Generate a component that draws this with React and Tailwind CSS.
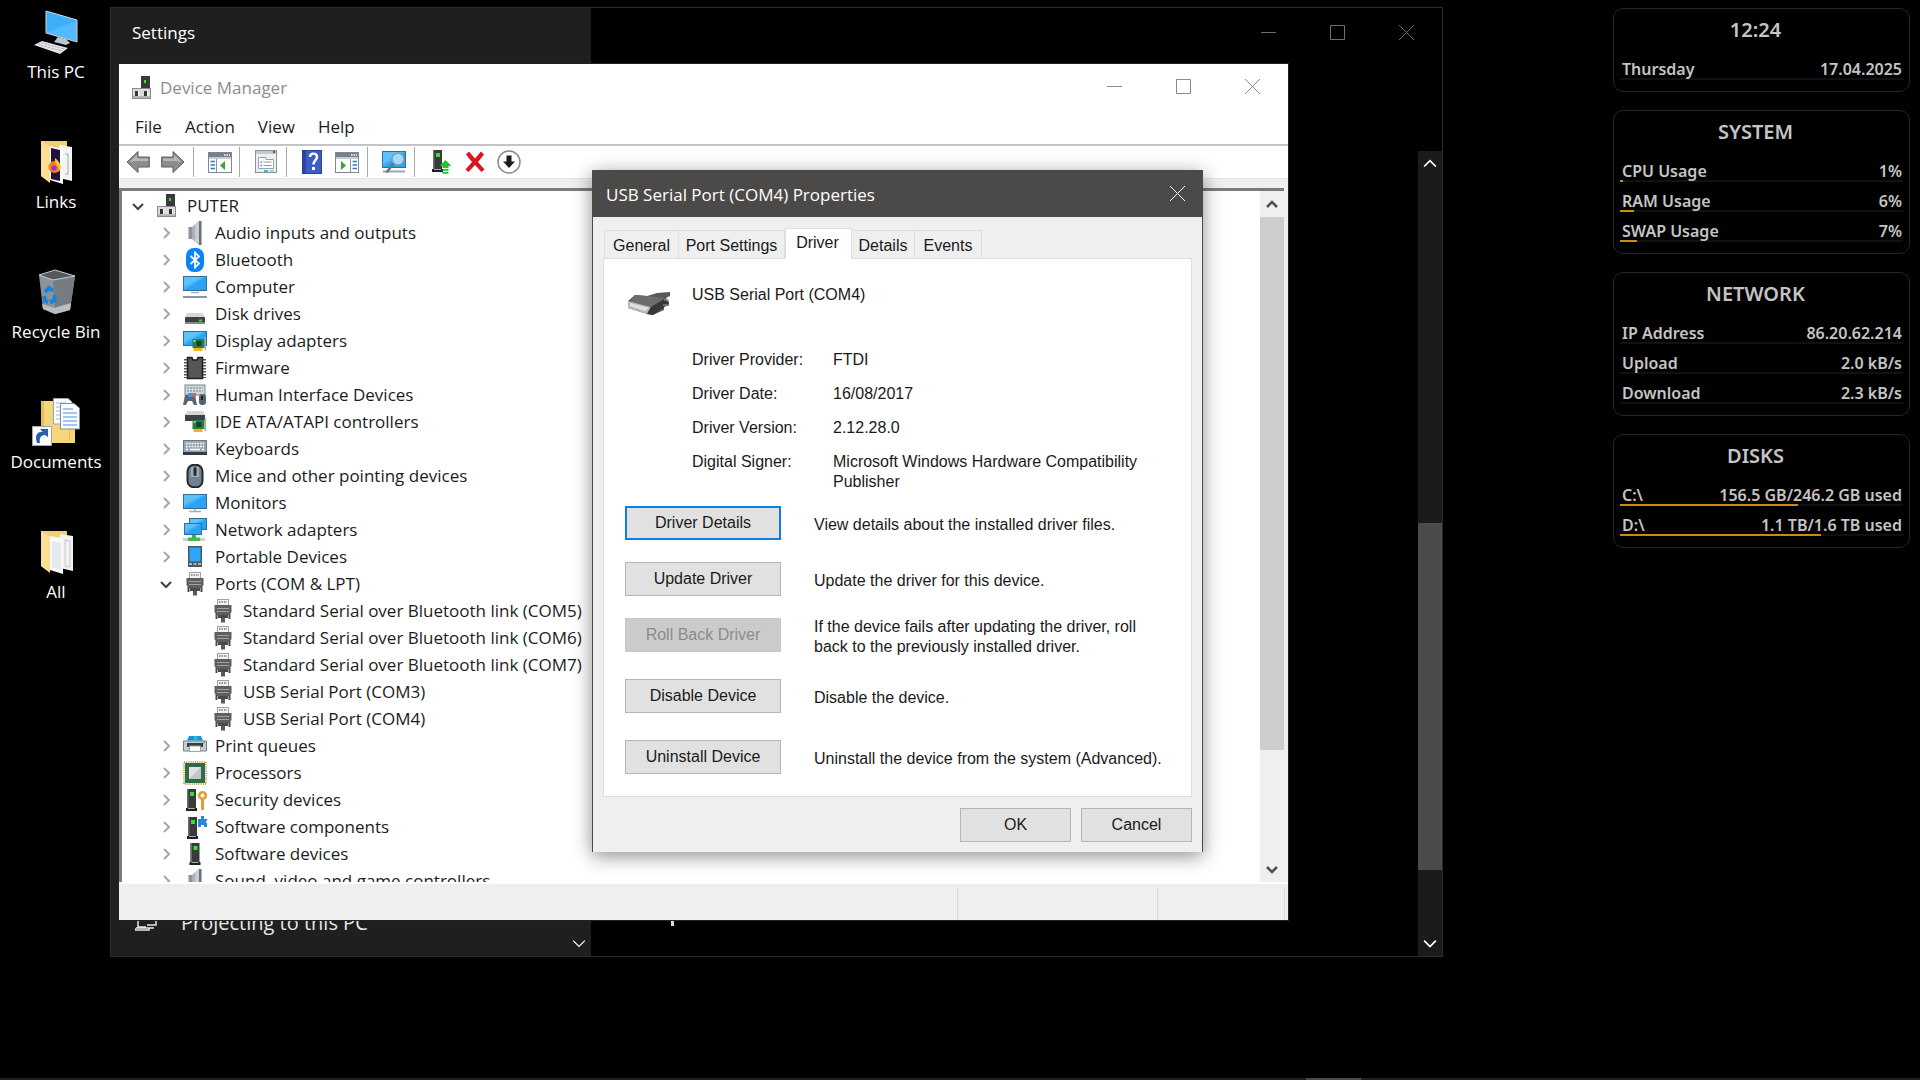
import React from "react";

const ui = "font-['Open_Sans','Noto_Sans',sans-serif]";
const shell = "font-['Liberation_Sans',Arial,sans-serif]";
const gadget = "font-['Trebuchet_MS','Noto_Sans','Open_Sans',sans-serif]";

function Svg({ size = "h-6 w-6", box = "0 0 24 24", children }) {
  return (
    <svg viewBox={box} className={`${size} block shrink-0`} aria-hidden="true">
      {children}
    </svg>
  );
}

/* ---------- shared drawing parts ---------- */

function Screen({ x = 0, y = 0, w = 24, h = 15 }) {
  return (
    <g>
      <rect x={x + 0.5} y={y + 0.5} width={w - 1} height={h - 1} fill="#3fb3f7" stroke="#2f6f98" />
      <path d={`M${x + 1} ${y + h - 1} L${x + w - 1} ${y + 1} V${y + h - 1} Z`} fill="#2aa3f2" />
      <path d={`M${x + 1} ${y + 1} H${x + w - 4} L${x + 1} ${y + h - 4} Z`} fill="#6cc9fb" opacity="0.7" />
    </g>
  );
}

function Tower({ x = 8, y = 1 }) {
  return (
    <g>
      <rect x={x + 1} y={y} width="9" height="19" fill="#3a3a3c" />
      <rect x={x + 1} y={y} width="1.5" height="19" fill="#6d6d70" />
      <rect x={x + 4} y={y + 3} width="4" height="4" fill="#2ee62e" />
      <rect x={x} y={y + 19} width="11" height="3" fill="#1f1f21" />
      <rect x={x + 2} y={y + 19} width="7" height="1" fill="#a9a9ab" />
    </g>
  );
}

function Card({ x = 10, y = 8 }) {
  return (
    <g>
      <rect x={x} y={y} width="12" height="9" fill="#2b7f45" />
      <rect x={x + 4} y={y + 2} width="5" height="5" fill="#173f2a" />
      <rect x={x + 1} y={y + 1} width="2" height="2" fill="#8fcf9f" />
      <rect x={x + 1} y={y + 9} width="9" height="3" fill="#f3b31b" />
      <rect x={x + 12} y={y - 2} width="1.5" height="13" fill="#a6acb0" />
    </g>
  );
}

/* ---------- tree icons ---------- */

const Manager = (
  <Svg>
    <rect x="11" y="0" width="9" height="13" fill="#39393b" />
    <rect x="14" y="4" width="2" height="3" fill="#2ee62e" />
    <rect x="2.500" y="12.500" width="18" height="10" fill="#dcdce0" stroke="#8b8b92" />
    <rect x="5" y="15" width="3" height="5" fill="#333" />
    <rect x="14" y="15" width="3" height="5" fill="#333" />
    <rect x="8" y="15" width="1" height="5" fill="#fff" />
    <rect x="17" y="15" width="1" height="5" fill="#fff" />
    <rect x="3" y="20" width="17" height="2" fill="#b5b5bb" />
  </Svg>
);
const Speaker = (
  <Svg>
    <path d="M5 6 H9 V18 H5 Z" fill="#8b949c" />
    <path d="M9 6 L16 0 V24 L9 18 Z" fill="#a9b0b6" />
    <path d="M12 3 L16 0 V24 L12 21 Z" fill="#c9ced2" />
    <rect x="16" y="0" width="2.500" height="24" fill="#68717a" />
    <rect x="5" y="6" width="1" height="12" fill="#c3c9ce" />
  </Svg>
);
const Bluetooth = (
  <Svg>
    <rect x="3" y="0" width="18" height="24" rx="8" fill="#0a84f5" />
    <path d="M7.500 8 L16 15.500 L12 19.500 V4.500 L16 8.500 L7.500 16" fill="none" stroke="#fff" strokeWidth="1.700" />
  </Svg>
);
const Computer = (
  <Svg>
    <Screen y={1} />
    <path d="M8 17.500 H16" stroke="#9fb0bd" strokeWidth="1.500" />
    <path d="M0 22 H24" stroke="#8798ab" strokeWidth="2" />
  </Svg>
);
const Disk = (
  <Svg>
    <path d="M4 11 H20 L22 15 H2 Z" fill="#d7d7da" />
    <rect x="2" y="15" width="20" height="7" rx="1" fill="#3e4043" />
    <rect x="2" y="20" width="20" height="2" fill="#88898c" />
    <rect x="16" y="17.500" width="3" height="2" fill="#2ee62e" />
  </Svg>
);
const Display = (
  <Svg>
    <Screen y={2} />
    <Card x={9.5} y={10} />
  </Svg>
);
const Firmware = (
  <Svg>
    <path d="M2.500 3 V22 M21.500 3 V22" stroke="#55585c" strokeWidth="3" strokeDasharray="1.500 1.500" />
    <path d="M4.500 1.500 H9 L10 4 H14 L15 1.500 H19.500 V22.500 H4.500 Z" fill="#55565a" stroke="#1e1f21" strokeWidth="1.500" />
  </Svg>
);
const Hid = (
  <Svg>
    <rect x="2" y="2" width="20" height="10" fill="#cfd6dc" stroke="#7a858f" />
    <path d="M4 5 H20 M4 8 H20" stroke="#7a858f" strokeDasharray="2 1" />
    <path d="M2 12 H12 L14 22 H11 L9 18 H5 L3 22 H0 Z" fill="#5a6672" />
    <rect x="5" y="10" width="5" height="4" fill="#2b9df0" />
    <rect x="10" y="10" width="3" height="4" fill="#e2642b" />
    <rect x="16" y="11" width="7" height="11" rx="3" fill="#56626e" />
    <rect x="18" y="13" width="2" height="4" fill="#222" />
  </Svg>
);
const Ide = (
  <Svg>
    <path d="M4 1 H20 L22 5 H2 Z" fill="#d7d7da" />
    <rect x="2" y="5" width="20" height="6" fill="#3e4043" />
    <Card x={9.5} y={10} />
  </Svg>
);
const Keyboard = (
  <Svg>
    <rect x="0.500" y="3.500" width="23" height="13" fill="#9aa7b2" stroke="#6b7783" />
    <path d="M3 6.500 H21 M3 9.500 H21" stroke="#fff" strokeWidth="1.500" strokeDasharray="1.700 1.100" />
    <path d="M3 12.500 H5 M7 12.500 H17 M19 12.500 H21" stroke="#fff" strokeWidth="1.500" />
    <rect x="0" y="15" width="24" height="3" fill="#333c45" />
  </Svg>
);
const Mouse = (
  <Svg>
    <rect x="4.500" y="0.800" width="15" height="22.500" rx="6.500" fill="#72828f" stroke="#24282c" strokeWidth="2" />
    <path d="M8 3 H16 V13 H8 Z" fill="#9badbc" />
    <rect x="10.500" y="3" width="3" height="9" rx="1.500" fill="#26292d" />
  </Svg>
);
const Monitor = (
  <Svg>
    <Screen y={3} />
    <path d="M12 18 V20 M6 20.500 H18" stroke="#9fb0bd" strokeWidth="1.500" />
  </Svg>
);
const Network = (
  <Svg>
    <Screen x={6} y={0} w={18} h={12} />
    <Screen x={1} y={5} w={18} h={12} />
    <rect x="9" y="17" width="4" height="3" fill="#3fae49" />
    <rect x="0" y="20" width="22" height="3" fill="#c9d2c9" />
    <rect x="5" y="19.500" width="12" height="3.500" fill="#46b84f" />
  </Svg>
);
const Portable = (
  <Svg>
    <rect x="5" y="1" width="14" height="21" fill="#4a5765" />
    <rect x="6.500" y="2.500" width="11" height="14" fill="#2ea5f8" />
    <path d="M6 19 H18" stroke="#aab6c1" strokeWidth="2" strokeDasharray="3 1.500" />
  </Svg>
);
const Port = (
  <Svg>
    <rect x="6.500" y="0.500" width="11" height="6" fill="#f2f2f2" stroke="#a2a2a4" />
    <path d="M8 3 H16" stroke="#77777a" strokeWidth="1.500" strokeDasharray="1.500 1" />
    <path d="M3.500 6 H20.500 V13 L18.500 16 H5.500 L3.500 13 Z" fill="#5f5f62" />
    <path d="M6 9.500 H18 M6 12.500 H18" stroke="#a2a2a5" />
    <path d="M7 16 H17 V19 H7 Z" fill="#4b4b4e" />
    <rect x="10" y="19" width="4" height="4.500" fill="#5a5a5d" />
    <path d="M5.500 15 V20 M18.500 15 V20" stroke="#4b4b4e" strokeWidth="2" />
  </Svg>
);
const Printer = (
  <Svg>
    <path d="M0.500 7 H23.500 V17 H0.500 Z" fill="#c7ccd0" stroke="#767e85" />
    <path d="M6 2 H18 L20 6.500 H4 Z" fill="#1d8fe8" />
    <path d="M11 2 H14 L15 6.500 H11 Z" fill="#1fc3a3" />
    <path d="M4 9 H20 V13 H4 Z" fill="#3a3d41" />
    <path d="M6.500 12 H17.500 V17.500 H6.500 Z" fill="#fff" stroke="#9da3a8" />
    <rect x="20" y="8" width="2" height="1.500" fill="#2ee62e" />
  </Svg>
);
const Cpu = (
  <Svg>
    <rect x="1" y="1" width="22" height="22" fill="none" stroke="#c3a04e" strokeWidth="2" strokeDasharray="1 1.200" />
    <rect x="2" y="2" width="20" height="20" fill="#2f6b49" />
    <rect x="6" y="6" width="12" height="12" fill="#dfe2e2" />
    <path d="M6 18 L18 6 V18 Z" fill="#c3c7c7" />
  </Svg>
);
const Security = (
  <Svg>
    <Tower x={3} y={1} />
    <circle cx="19.500" cy="7.500" r="3.300" fill="none" stroke="#dfa033" strokeWidth="2.600" />
    <path d="M19.500 11 V22" stroke="#dfa033" strokeWidth="3" />
  </Svg>
);
const SoftComp = (
  <Svg>
    <Tower x={4} y={2} />
    <path d="M15 4 H18 V1 H21 V4 H24 V6 H23 V8 H24 V12 H21 V10 H18 V12 H15 Z" fill="#2b87d8" />
  </Svg>
);
const SoftDev = (
  <Svg>
    <Tower x={6.5} y={1} />
  </Svg>
);

/* ---------- toolbar icons ---------- */

function ArrowIcon({ flip }) {
  return (
    <Svg>
      <g transform={flip ? "translate(24 0) scale(-1 1)" : undefined}>
        <path d="M1 12 L12 1.500 V7 H23.300 V17 H12 V22.500 Z" fill="#8d8d8d" stroke="#5c5c5c" strokeLinejoin="round" />
        <path d="M3.500 12 L11 5 V8.500 H22 V11 H8 Z" fill="#b9b9b9" />
      </g>
    </Svg>
  );
}
function PaneIcon({ right }) {
  return (
    <Svg>
      <rect x="0.500" y="2.500" width="23" height="20" fill="#fff" stroke="#7d8794" />
      <rect x="1" y="3" width="22" height="4" fill="#76808e" />
      <path d="M16 5 H22" stroke="#fff" strokeWidth="1.500" strokeDasharray="1.500 1" />
      <rect x="1" y="7" width="22" height="2" fill="#c5ccd4" />
      {right ? (
        <g>
          <path d="M15.500 9 V22" stroke="#8a94a1" />
          <path d="M17.500 11.500 H22 M17.500 15 H22 M17.500 18.500 H22" stroke="#3a77c4" strokeWidth="1.500" />
          <path d="M6 11 L11 15.500 L6 20 Z" fill="#35a82f" />
        </g>
      ) : (
        <g>
          <path d="M8.500 9 V22" stroke="#8a94a1" />
          <path d="M2.500 11.500 H7 M2.500 15 H7 M2.500 18.500 H7" stroke="#3a77c4" strokeWidth="1.500" />
          <path d="M17 11 L12 15.500 L17 20 Z" fill="#35a82f" />
        </g>
      )}
    </Svg>
  );
}
const SheetIcon = (
  <Svg>
    <rect x="1.500" y="0.500" width="21" height="22" fill="#eceef0" stroke="#8b9299" />
    <rect x="2" y="1" width="20" height="3" fill="#c3c9cf" />
    <rect x="19" y="1" width="2" height="2" fill="#555" />
    <path d="M4.500 7.500 H12 V9.500 H19.500 V18.500 H4.500 Z" fill="#fff" stroke="#9aa3ab" />
    <path d="M6.500 12 H8 M6.500 15.500 H8" stroke="#2f8fd8" strokeWidth="1.500" />
    <path d="M9.500 12 H17.500 M9.500 15.500 H17.500" stroke="#8f989f" />
    <rect x="10" y="20" width="4" height="2" fill="#35b5e8" />
    <rect x="16" y="20" width="4" height="2" fill="#9ad7ef" />
  </Svg>
);
const HelpIcon = (
  <Svg>
    <rect x="2.500" y="0.500" width="19" height="23" fill="#3c5ec4" stroke="#2c3f8c" />
    <rect x="3" y="1" width="3" height="22" fill="#2c459e" />
    <path d="M10 7 C10 2.500 17 2.500 17 7 C17 10 13.500 10.500 13.500 14.500" fill="none" stroke="#fff" strokeWidth="2.400" />
    <rect x="12" y="17" width="3" height="3" fill="#fff" />
  </Svg>
);
const ScanIcon = (
  <Svg>
    <Screen y={1} w={24} h={17} />
    <path d="M1 21.500 H23" stroke="#93a7b8" strokeWidth="2" />
    <path d="M11.500 13.500 L4.500 22.500" stroke="#6b7780" strokeWidth="2.500" />
    <circle cx="16" cy="9" r="6" fill="#9fdcfb" stroke="#7e9bb0" strokeWidth="1.500" />
  </Svg>
);
const UpdateIcon = (
  <Svg>
    <Tower x={2} y={0} />
    <path d="M15.500 10 L21.500 16 H18.500 V18 H12.500 V16 H9.500 Z" fill="#22c32c" />
    <path d="M12.500 19.800 H18.500 M12.500 22.800 H18.500" stroke="#22c32c" strokeWidth="1.700" />
  </Svg>
);
const RemoveIcon = (
  <Svg>
    <path d="M3 4.500 L6 1.500 L12 8.500 L18 1.500 L21 4.500 L15 12 L21.500 19.500 L18.500 22 L12 15 L5.500 22 L2.500 19.500 L9 12 Z" fill="#dd1420" />
  </Svg>
);
const DownIcon = (
  <Svg>
    <circle cx="12" cy="12" r="11" fill="#fff" stroke="#8b8b8b" strokeWidth="1.500" />
    <path d="M9.500 5.500 H14.500 V11.500 H18 L12 18 L6 11.500 H9.500 Z" fill="#1b1b1b" />
  </Svg>
);

/* ---------- desktop icons ---------- */

const ThisPc = (
  <Svg size="h-12 w-12" box="0 0 48 48">
    <path d="M14 3 L45 12 V34 L14 25 Z" fill="#3eb0fb" stroke="#cfd8de" strokeWidth="1" />
    <path d="M15 24 L44 13 V33 Z" fill="#64c3ff" opacity="0.55" />
    <path d="M26 29 L34 31 L38 35 L34 37 L22 34 Z" fill="#b7c7d1" />
    <path d="M2 37 L10 33 L36 40 L28 46 Z" fill="#e2e5e7" />
    <path d="M6 36.500 L30 43 M9 34.800 L33 41.200" stroke="#9aa4ab" strokeWidth="0.800" strokeDasharray="2.500 1" />
  </Svg>
);
const FolderBase = (
  <g>
    <path d="M9 3 H35 V10 H18 V44 L9 38 Z" fill="#f0cf78" />
    <path d="M9 3 L18 9 V45 L9 38 Z" fill="#fadf94" />
  </g>
);
const Links = (
  <Svg size="h-12 w-12" box="0 0 48 48">
    {FolderBase}
    <path d="M27 7 L40 9 V43 L27 40 Z" fill="#f4f4f5" />
    <path d="M18 8 L31 11 V46 L18 42 Z" fill="#fbfbfb" />
    <path d="M19 10 L28 12 V43 L19 41 Z" fill="#20123a" />
    <circle cx="22.500" cy="29" r="6" fill="#ff7a1f" />
    <path d="M23 20 C29 24 30 31 26 34 C29 28 22 27 23 20 Z" fill="#ffcb2f" />
    <circle cx="22" cy="30" r="2.500" fill="#7b3fd6" />
    <path d="M33 16 H36 V36 H33" fill="none" stroke="#8f959a" strokeWidth="0.800" />
  </Svg>
);
const AllFolder = (
  <Svg size="h-12 w-12" box="0 0 48 48">
    {FolderBase}
    <path d="M28 6 L41 8 V43 L28 40 Z" fill="#f1f2f3" />
    <path d="M18 8 L31 10 V46 L18 42 Z" fill="#fafafa" />
    <path d="M20 13 L29 15 V42 L20 39 Z" fill="#e6eaec" />
    <path d="M33 12 L38 13 V39 L33 38 Z" fill="none" stroke="#c5c9cb" />
  </Svg>
);
const Recycle = (
  <Svg size="h-12 w-12" box="0 0 48 48">
    <path d="M7 7 L21 11 L43 8 L38 42 L23 46 L11 41 Z" fill="#8f9398" />
    <path d="M21 11 L43 8 L38 42 L23 46 Z" fill="#777c82" />
    <path d="M7 7 L23 2 L43 8 L21 12 Z" fill="#55585c" stroke="#c9cdd0" strokeWidth="1" />
    <path d="M10 36 L22 40 L39 35 L38 42 L23 46 L11 41 Z" fill="#b9bec2" />
    <g fill="none" stroke="#1683dc" strokeWidth="4">
      <path d="M13 24 L17 20 L21 23" />
      <path d="M23 27 L22 33 L18 34" />
      <path d="M12 28 L13 33 L16 34" />
    </g>
  </Svg>
);
const DocsFolder = (
  <Svg size="h-12 w-12" box="0 0 48 48">
    <path d="M9 3 H30 V10 H43 V45 H9 Z" fill="#f6d67d" />
    <path d="M9 3 V45 H12 V3 Z M37 12 V43 H38 V12 Z" fill="#e8bf55" />
    <path d="M21.500 0.500 H36 L40 4 V26 H21.500 Z" fill="#fbfcfd" stroke="#9aa3aa" />
    <path d="M24 5 H34 M24 9 H34 M24 13 H30 M24 17 H30 M24 21 H30" stroke="#8bbcf0" />
    <path d="M28.500 5.500 H42 L47.500 10 V31 H28.500 Z" fill="#fbfcfd" stroke="#858e96" />
    <path d="M31 11 H41 M31 15 H45 M31 19 H45 M31 23 H45 M31 27 H45" stroke="#4a94e8" strokeWidth="1.200" />
    <rect x="0.500" y="28.500" width="19" height="19" fill="#fbfbfb" stroke="#a5a5a5" />
    <path d="M5 45 C2 37 6 33 11 34 L8 31 H16 V39 L13 37 C9 37 7 40 8 45 Z" fill="#2a5ea8" />
  </Svg>
);

const desktopIcons = [
  { label: "This PC", icon: ThisPc },
  { label: "Links", icon: Links },
  { label: "Recycle Bin", icon: Recycle },
  { label: "Documents", icon: DocsFolder },
  { label: "All", icon: AllFolder },
];

const tree = [
  { label: "Audio inputs and outputs", icon: Speaker },
  { label: "Bluetooth", icon: Bluetooth },
  { label: "Computer", icon: Computer },
  { label: "Disk drives", icon: Disk },
  { label: "Display adapters", icon: Display },
  { label: "Firmware", icon: Firmware },
  { label: "Human Interface Devices", icon: Hid },
  { label: "IDE ATA/ATAPI controllers", icon: Ide },
  { label: "Keyboards", icon: Keyboard },
  { label: "Mice and other pointing devices", icon: Mouse },
  { label: "Monitors", icon: Monitor },
  { label: "Network adapters", icon: Network },
  { label: "Portable Devices", icon: Portable },
  {
    label: "Ports (COM & LPT)",
    icon: Port,
    children: [
      "Standard Serial over Bluetooth link (COM5)",
      "Standard Serial over Bluetooth link (COM6)",
      "Standard Serial over Bluetooth link (COM7)",
      "USB Serial Port (COM3)",
      "USB Serial Port (COM4)",
    ],
  },
  { label: "Print queues", icon: Printer },
  { label: "Processors", icon: Cpu },
  { label: "Security devices", icon: Security },
  { label: "Software components", icon: SoftComp },
  { label: "Software devices", icon: SoftDev },
  { label: "Sound, video and game controllers", icon: Speaker },
];

const gadgets = [
  { title: "12:24", rows: [{ name: "Thursday", value: "17.04.2025" }] },
  {
    title: "SYSTEM",
    rows: [
      { name: "CPU Usage", value: "1%", bar: 1 },
      { name: "RAM Usage", value: "6%", bar: 5 },
      { name: "SWAP Usage", value: "7%", bar: 6 },
    ],
  },
  {
    title: "NETWORK",
    rows: [
      { name: "IP Address", value: "86.20.62.214" },
      { name: "Upload", value: "2.0 kB/s" },
      { name: "Download", value: "2.3 kB/s" },
    ],
  },
  {
    title: "DISKS",
    rows: [
      { name: "C:\\", value: "156.5 GB/246.2 GB used", bar: 63 },
      { name: "D:\\", value: "1.1 TB/1.6 TB used", bar: 71 },
    ],
  },
];

/* ---------- small controls ---------- */

function Glyph({ kind, tone }) {
  const paths = {
    min: "M0 7.5 H15",
    max: "M0.5 0.5 H14.5 V14.5 H0.5 Z",
    close: "M0 0 L15 15 M15 0 L0 15",
  };
  return (
    <svg viewBox="0 0 15 15" className={`h-[15px] w-[15px] ${tone}`} aria-hidden="true">
      <path d={paths[kind]} fill="none" stroke="currentColor" />
    </svg>
  );
}

function WindowButtons({ tone }) {
  return (
    <div className="flex pr-px">
      {[
        ["Minimize", "min"],
        ["Maximize", "max"],
        ["Close", "close"],
      ].map(([name, kind]) => (
        <button key={kind} type="button" aria-label={name} className="flex h-11 w-[69px] items-center justify-center">
          <Glyph kind={kind} tone={tone} />
        </button>
      ))}
    </div>
  );
}

function Chevron({ dir, className, width = 1.5 }) {
  const d = { up: "M1 9 L6 4 L11 9", down: "M1 4 L6 9 L11 4", right: "M4 1 L9 6 L4 11" }[dir];
  return (
    <svg viewBox="0 0 12 12" className={`block shrink-0 ${className}`} aria-hidden="true">
      <path d={d} fill="none" stroke="currentColor" strokeWidth={width} />
    </svg>
  );
}

/* ---------- desktop columns ---------- */

function DesktopIcons() {
  return (
    <nav aria-label="Desktop" className={`flex w-28 flex-col ${ui}`}>
      {desktopIcons.map((item) => (
        <a key={item.label} href="#" className="flex h-[130px] flex-col items-center pt-2 text-[17px] text-white">
          {item.icon}
          <span className="mt-1 leading-6 whitespace-nowrap">{item.label}</span>
        </a>
      ))}
    </nav>
  );
}

function Gadgets() {
  return (
    <aside aria-label="System monitor" className={`flex w-[297px] flex-col gap-[18px] font-semibold text-[#c4c4c4] ${gadget}`}>
      {gadgets.map((g) => (
        <section key={g.title} className="rounded-[10px] border border-[#262626] px-[6px] pb-[11px]">
          <h2 className="pt-[6px] pr-3 text-center text-xl leading-[29px]">{g.title}</h2>
          <dl className="pt-[6px]">
            {g.rows.map((r) => (
              <div key={r.name} className="pt-[10px]">
                <div className="flex justify-between pr-px pl-[2px] text-base leading-[18px]">
                  <dt>{r.name}</dt>
                  <dd>{r.value}</dd>
                </div>
                <div className="h-[2px] bg-[#111]">
                  <div className="h-full bg-[#c98d0a]" style={{ width: `${r.bar ?? 0}%` }} />
                </div>
              </div>
            ))}
          </dl>
        </section>
      ))}
    </aside>
  );
}

/* ---------- windows ---------- */

function SettingsWindow() {
  return (
    <section
      aria-label="Settings"
      className={`absolute top-[7px] right-[477px] bottom-[123px] left-[110px] flex border border-[#2c2c2c] bg-black text-white ${ui}`}
    >
      <div className="flex w-[480px] shrink-0 flex-col justify-between bg-[#1f1f1f]">
        <h1 className="px-[21px] pt-[13px] text-[17px] leading-6">Settings</h1>
        <div className="flex items-end justify-between pr-[5px]">
          <a href="#" className="flex items-center gap-6 pb-[19px] pl-6 text-xl leading-7 text-[#e8e8e8]">
            <svg viewBox="0 0 22 22" className="h-[22px] w-[22px]" fill="none" stroke="currentColor" strokeWidth="1.500" aria-hidden="true">
              <path d="M11 15 H3 V4 H18 V8 M1 16 H14 V18 H0 V16 M11 8 H21 V13 H12 M14 16 H19" />
            </svg>
            Projecting to this PC
          </a>
          <Chevron dir="down" className="mb-[6px] h-[14px] w-[14px] text-white" width={1} />
        </div>
      </div>
      <div className="flex min-w-0 flex-1 flex-col">
        <div className="flex h-[143px] shrink-0 items-start justify-end pt-[2px]">
          <WindowButtons tone="text-[#6f6f6f]" />
        </div>
        <div className="flex min-h-0 flex-1 items-stretch justify-between">
          <div className="mb-[30px] ml-20 h-[6px] w-[3px] self-end bg-[#dcdcdc]" />
          <div className="flex w-6 flex-col items-center bg-[#1b1b1b] text-white">
            <Chevron dir="up" className="mt-[5px] h-[14px] w-[14px]" />
            <div className="flex w-full flex-1 flex-col py-1">
              <div className="flex-[349]" />
              <div className="flex-[347] bg-[#4b4b4b]" />
              <div className="flex-[62]" />
            </div>
            <Chevron dir="down" className="mb-[6px] h-[14px] w-[14px]" />
          </div>
        </div>
      </div>
    </section>
  );
}

function ToolButton({ label, children, className = "" }) {
  return (
    <button type="button" aria-label={label} className={`block ${className}`}>
      {children}
    </button>
  );
}

function Separator({ className = "ml-2" }) {
  return <div className={`h-[30px] w-px bg-[#a9a9a9] ${className}`} />;
}

function Toolbar() {
  return (
    <div role="toolbar" aria-label="Actions" className="flex h-[33px] items-center border-b border-[#e6e6e6] pl-[7px]">
      <ToolButton label="Back"><ArrowIcon /></ToolButton>
      <ToolButton label="Forward" className="ml-[11px]"><ArrowIcon flip /></ToolButton>
      <Separator />
      <ToolButton label="Show console tree" className="ml-[14px]"><PaneIcon /></ToolButton>
      <Separator className="ml-[7px]" />
      <ToolButton label="Properties" className="ml-[14px]">{SheetIcon}</ToolButton>
      <Separator />
      <ToolButton label="Help" className="ml-[13px]">{HelpIcon}</ToolButton>
      <ToolButton label="Show action pane" className="ml-[11px]"><PaneIcon right /></ToolButton>
      <Separator />
      <ToolButton label="Scan for hardware changes" className="ml-[14px]">{ScanIcon}</ToolButton>
      <Separator />
      <ToolButton label="Update driver" className="ml-[15px]">{UpdateIcon}</ToolButton>
      <ToolButton label="Uninstall device" className="ml-[9px]">{RemoveIcon}</ToolButton>
      <ToolButton label="Disable device" className="ml-[10px]">{DownIcon}</ToolButton>
    </div>
  );
}

function DeviceTree() {
  return (
    <ul role="tree" aria-label="Devices" className="min-w-0 flex-1 overflow-hidden pt-[1px] text-[17px] leading-[27px] text-[#1c1c1c]">
      <li role="treeitem" aria-expanded="true">
        <div className="flex h-[27px] items-center pl-[10px]">
          <Chevron dir="down" className="h-3 w-3 text-[#404040]" width={2} />
          <span className="mr-2 ml-[11px]">{Manager}</span>
          PUTER
        </div>
        <ul role="group">
          {tree.map((node) => (
            <li key={node.label} role="treeitem" aria-expanded={Boolean(node.children)}>
              <div className="flex h-[27px] items-center pl-[38px]">
                {node.children ? (
                  <Chevron dir="down" className="h-3 w-3 text-[#404040]" width={2} />
                ) : (
                  <Chevron dir="right" className="h-3 w-3 text-[#a6a6a6]" width={2} />
                )}
                <span className="mr-2 ml-[11px]">{node.icon}</span>
                <span className="whitespace-nowrap">{node.label}</span>
              </div>
              {node.children && (
                <ul role="group">
                  {node.children.map((name) => (
                    <li key={name} role="treeitem" className="flex h-[27px] items-center pl-[89px]">
                      {Port}
                      <span className="ml-2 whitespace-nowrap">{name}</span>
                    </li>
                  ))}
                </ul>
              )}
            </li>
          ))}
        </ul>
      </li>
    </ul>
  );
}

function DeviceManagerWindow() {
  return (
    <section
      aria-label="Device Manager"
      className={`absolute top-[63px] right-[631px] bottom-[159px] left-[118px] flex flex-col border border-[#222] bg-white ${ui}`}
    >
      <header className="flex shrink-0 items-start justify-between">
        <div className="flex items-center pt-[10px] pl-[11px] text-[17px] leading-[27px] text-[#8c8c8c]">
          {Manager}
          <span className="ml-[6px]">Device Manager</span>
        </div>
        <WindowButtons tone="text-[#8a8a8a]" />
      </header>
      <div role="menubar" className="flex shrink-0 gap-[23px] border-b-2 border-[#c3c3c8] pt-[5px] pb-1 pl-4 text-[17px] leading-[27px] text-[#1c1c1c]">
        {["File", "Action", "View", "Help"].map((m) => (
          <button key={m} type="button" role="menuitem">
            {m}
          </button>
        ))}
      </div>
      <Toolbar />
      <div className="flex min-h-0 flex-1 flex-col bg-[#efefef] pt-[9px] pr-1">
        <div className="flex min-h-0 flex-1 border-t-[3px] border-l-[3px] border-[#7b7b7b] bg-white">
          <DeviceTree />
          <div className="flex w-6 flex-col items-center bg-[#efefef] text-[#505050]">
            <Chevron dir="up" className="my-[7px] h-3 w-3" width={2.5} />
            <div className="flex w-full flex-1 flex-col">
              <div className="flex-[533] bg-[#cdcdcd]" />
              <div className="flex-[106]" />
            </div>
            <Chevron dir="down" className="my-[7px] h-3 w-3" width={2.5} />
          </div>
        </div>
      </div>
      <footer className="flex h-[38px] shrink-0 items-end border-t-2 border-white bg-[#efefef] pr-[3px]">
        <div className="h-8 flex-1 border-r border-[#dadada]" />
        <div className="h-8 w-[200px] border-r border-[#dadada]" />
        <div className="h-8 w-[127px] border-r border-[#dadada]" />
      </footer>
    </section>
  );
}

const tabs = [
  { name: "General", width: "w-[74px]" },
  { name: "Port Settings", width: "w-[106px]" },
  { name: "Driver", width: "w-[67px]" },
  { name: "Details", width: "w-[63px]" },
  { name: "Events", width: "w-[67px]" },
];

const details = [
  ["Driver Provider:", "FTDI"],
  ["Driver Date:", "16/08/2017"],
  ["Driver Version:", "2.12.28.0"],
  ["Digital Signer:", "Microsoft Windows Hardware Compatibility Publisher"],
];

const actions = [
  { name: "Driver Details", text: "View details about the installed driver files.", look: "border-2 border-[#0f7fdc] bg-[#e1e1e1]", gap: "mt-[14px]" },
  { name: "Update Driver", text: "Update the driver for this device.", look: "border border-[#b5b5b5] bg-[#e1e1e1]", gap: "mt-[22px]" },
  {
    name: "Roll Back Driver",
    text: "If the device fails after updating the driver, roll back to the previously installed driver.",
    look: "border border-[#c6c6c6] bg-[#cbcbcb] text-[#8b8b8b]",
    gap: "mt-[22px]",
    disabled: true,
  },
  { name: "Disable Device", text: "Disable the device.", look: "border border-[#b5b5b5] bg-[#e1e1e1]", gap: "mt-[27px]" },
  { name: "Uninstall Device", text: "Uninstall the device from the system (Advanced).", look: "border border-[#b5b5b5] bg-[#e1e1e1]", gap: "mt-[27px]" },
];

function PropertiesDialog() {
  return (
    <section
      role="dialog"
      aria-label="USB Serial Port (COM4) Properties"
      className="absolute top-[170px] left-[592px] w-[611px] border-x border-[#4b4a48] bg-[#efefef] shadow-[0_4px_18px_rgba(0,0,0,0.45)]"
    >
      <header className={`flex h-[47px] items-center justify-between bg-[#4b4a48] pr-[17px] pl-[13px] text-[17px] text-white ${ui}`}>
        <h2 className="pt-[2px]">USB Serial Port (COM4) Properties</h2>
        <button type="button" aria-label="Close">
          <Glyph kind="close" tone="text-white" />
        </button>
      </header>
      <div className={`px-[10px] pt-[11px] pb-[10px] text-base leading-5 text-[#1a1a1a] ${shell}`}>
        <div role="tablist" className="flex h-[30px] items-end">
          <div className="h-7 w-[2px] border-r border-[#dedede]" />
          {tabs.map((t) => {
            const on = t.name === "Driver";
            return (
              <button
                key={t.name}
                type="button"
                role="tab"
                aria-selected={on}
                className={`${t.width} whitespace-nowrap border-t border-[#dedede] ${
                  on ? "relative -mb-px h-[31px] border-x bg-white pr-[2px] pb-[3px]" : "h-7 border-r pt-[2px]"
                }`}
              >
                {t.name}
              </button>
            );
          })}
        </div>
        <div role="tabpanel" className="border border-[#dedede] bg-white pt-[26px] pb-[22px] pl-[21px]">
          <div className="flex h-[65px] items-start">
            <svg viewBox="0 0 44 24" className="mt-[7px] ml-[2px] h-6 w-11" aria-hidden="true">
              <path d="M1 9 L8 3 L20 4 L30 1 L43 0 L43 4 L39 6 L42 10 L42 14 L37 14 L37 18 L26 23 L20 22 L1 16 Z" fill="#59595b" />
              <path d="M1 9 L24 15 L20 22 L1 16 Z" fill="#b9b9bb" />
              <path d="M3 11 L22 16 L18 19 L3 14 Z" fill="#e2e2e3" />
              <path d="M8 3 L20 4 L38 6 L24 15 L3 9 Z" fill="#6d6d70" />
              <path d="M24 15 L38 7 L42 12 L36 16 L26 23 L20 22 Z" fill="#38383a" />
              <path d="M37 8 L42 8 M36 13 L42 13" stroke="#a5a5a7" />
            </svg>
            <h3 className="ml-[21px]">USB Serial Port (COM4)</h3>
          </div>
          <dl className="grid grid-cols-[141px_310px] gap-y-[14px] pl-[67px]">
            {details.map(([k, v]) => (
              <React.Fragment key={k}>
                <dt>{k}</dt>
                <dd>{v}</dd>
              </React.Fragment>
            ))}
          </dl>
          {actions.map((a) => (
            <div key={a.name} className={`flex h-[34px] items-center ${a.gap}`}>
              <button type="button" disabled={a.disabled} className={`h-full w-[156px] shrink-0 ${a.look}`}>
                {a.name}
              </button>
              <p className="ml-[33px] w-[350px] pt-1">{a.text}</p>
            </div>
          ))}
        </div>
        <div className="mt-[11px] flex justify-end gap-[10px]">
          <button type="button" className="h-[34px] w-[111px] border border-[#b5b5b5] bg-[#e1e1e1]">OK</button>
          <button type="button" className="h-[34px] w-[111px] border border-[#b5b5b5] bg-[#e1e1e1]">Cancel</button>
        </div>
      </div>
    </section>
  );
}

export default function App() {
  return (
    <main className="relative flex h-screen flex-col overflow-hidden bg-black">
      <div className="flex flex-1 justify-between pr-[10px]">
        <DesktopIcons />
        <div className="pt-2">
          <Gadgets />
        </div>
      </div>
      <SettingsWindow />
      <DeviceManagerWindow />
      <PropertiesDialog />
      <div className="flex h-[2px] shrink-0 bg-[#201f20]">
        <div className="ml-[68%] w-[55px] bg-[#4a4a4a]" />
      </div>
    </main>
  );
}
